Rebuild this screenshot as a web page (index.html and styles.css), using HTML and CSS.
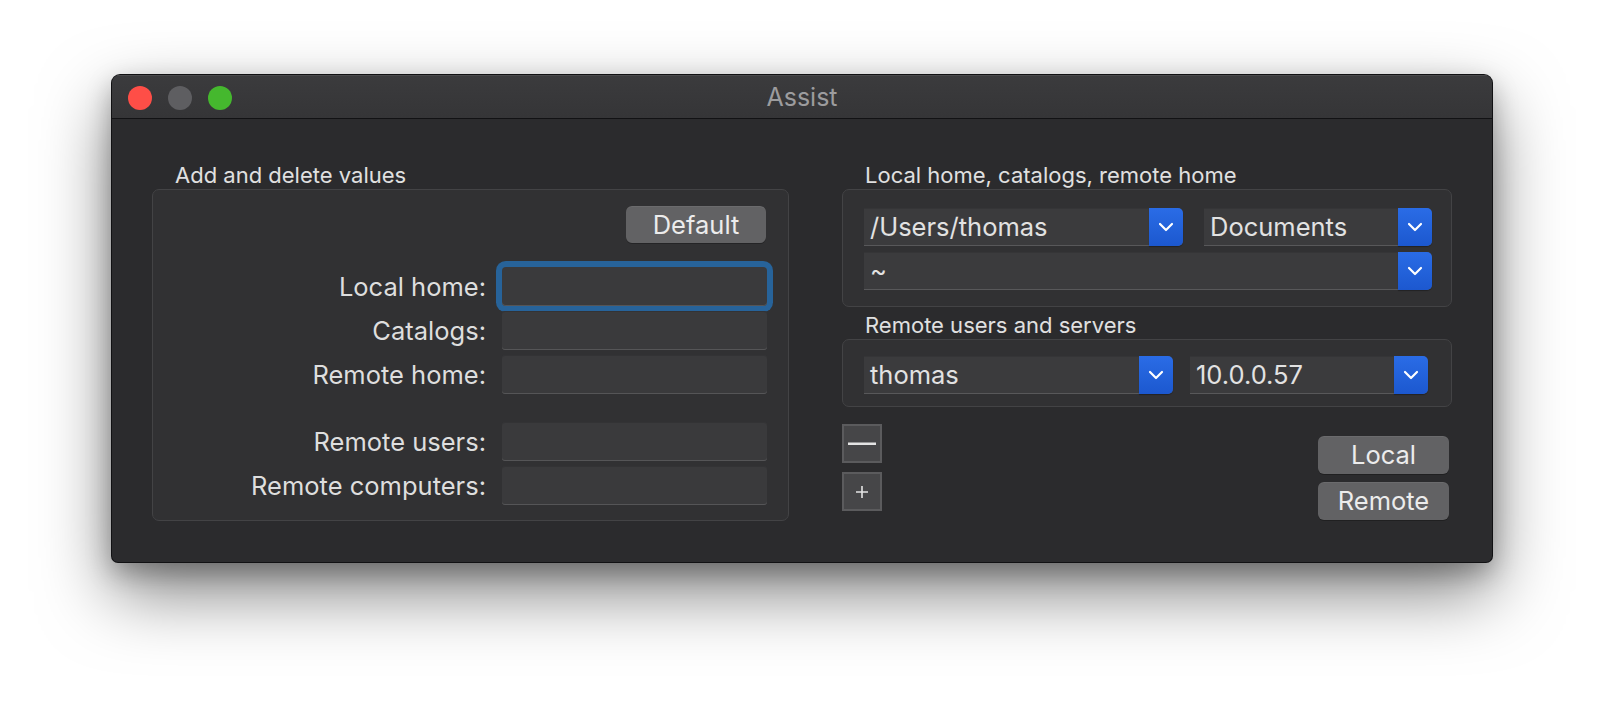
FILE: index.html
```html
<!DOCTYPE html>
<html>
<head>
<meta charset="utf-8">
<title>Assist</title>
<link rel="stylesheet" href="styles.css">
</head>
<body>
<div class="window">
  <div class="titlebar">
    <div class="lights">
      <span class="light red"></span>
      <span class="light gray"></span>
      <span class="light green"></span>
    </div>
    <div class="title">Assist</div>
    <div class="spacer"></div>
  </div>
  <div class="content">
    <section class="col col-left">
      <div class="group-label">Add and delete values</div>
      <div class="box box-values">
        <div class="btn-row"><button class="btn btn-default">Default</button></div>
        <div class="form">
          <label class="lbl">Local home:</label><div class="field focused"></div>
          <label class="lbl">Catalogs:</label><div class="field"></div>
          <label class="lbl">Remote home:</label><div class="field"></div>
          <label class="lbl sep">Remote users:</label><div class="field sep"></div>
          <label class="lbl">Remote computers:</label><div class="field"></div>
        </div>
      </div>
    </section>
    <section class="col col-right">
      <div class="group-label">Local home, catalogs, remote home</div>
      <div class="box box-paths">
        <div class="row row-paths">
          <div class="popup w-users"><span class="ptext">/Users/thomas</span><span class="pbtn"><svg width="16" height="10" viewBox="0 0 16 10"><polyline points="2,2 8,8 14,2" fill="none" stroke="#fff" stroke-width="2.2" stroke-linecap="round" stroke-linejoin="round"/></svg></span></div>
          <div class="popup w-docs"><span class="ptext">Documents</span><span class="pbtn"><svg width="16" height="10" viewBox="0 0 16 10"><polyline points="2,2 8,8 14,2" fill="none" stroke="#fff" stroke-width="2.2" stroke-linecap="round" stroke-linejoin="round"/></svg></span></div>
        </div>
        <div class="popup w-full"><span class="ptext">~</span><span class="pbtn"><svg width="16" height="10" viewBox="0 0 16 10"><polyline points="2,2 8,8 14,2" fill="none" stroke="#fff" stroke-width="2.2" stroke-linecap="round" stroke-linejoin="round"/></svg></span></div>
      </div>
      <div class="group-label">Remote users and servers</div>
      <div class="box box-remote">
        <div class="row row-remote">
          <div class="popup w-user"><span class="ptext">thomas</span><span class="pbtn"><svg width="16" height="10" viewBox="0 0 16 10"><polyline points="2,2 8,8 14,2" fill="none" stroke="#fff" stroke-width="2.2" stroke-linecap="round" stroke-linejoin="round"/></svg></span></div>
          <div class="popup w-server"><span class="ptext">10.0.0.57</span><span class="pbtn"><svg width="16" height="10" viewBox="0 0 16 10"><polyline points="2,2 8,8 14,2" fill="none" stroke="#fff" stroke-width="2.2" stroke-linecap="round" stroke-linejoin="round"/></svg></span></div>
        </div>
      </div>
      <div class="actions">
        <div class="pm">
          <button class="sq"><svg width="28" height="4" viewBox="0 0 28 4"><rect x="0" y="0.5" width="28" height="2.5" fill="#e4e4e4"/></svg></button>
          <button class="sq"><svg width="14" height="14" viewBox="0 0 14 14"><path d="M7 1V13M1 7H13" stroke="#e4e4e4" stroke-width="1.6"/></svg></button>
        </div>
        <div class="lr">
          <button class="btn btn-side">Local</button>
          <button class="btn btn-side">Remote</button>
        </div>
      </div>
    </section>
  </div>
</div>
</body>
</html>
```
FILE: styles.css
```css
* { box-sizing: border-box; }
html, body { margin: 0; padding: 0; }
body {
  background: #ffffff;
  width: 1604px;
  height: 710px;
  overflow: hidden;
  padding: 75px 0 0 112px;
  font-family: "Inter", "Roboto", "Liberation Sans", sans-serif;
  color: #dedede;
}
.window {
  width: 1380px;
  height: 487px;
  background: #2b2b2d;
  border-radius: 8px 8px 6px 6px;
  box-shadow: 0 0 0 1px #111113, 0 30px 70px rgba(0,0,0,0.5), 0 10px 26px rgba(0,0,0,0.28);
  overflow: hidden;
  display: flex;
  flex-direction: column;
}
.titlebar {
  height: 44px;
  flex: none;
  display: grid;
  grid-template-columns: 1fr auto 1fr;
  align-items: center;
  background: linear-gradient(#3b3b3d, #353537);
  border-bottom: 1px solid #121214;
  box-shadow: inset 0 1px 0 #4a4a4c;
}
.lights {
  display: flex;
  gap: 16px;
  padding-left: 16px;
  padding-top: 2px;
}
.light {
  width: 24px;
  height: 24px;
  border-radius: 50%;
  display: block;
}
.red { background: #fe4e47; }
.gray { background: #5e5e61; }
.green { background: #45b82e; }
.title {
  font-size: 25px;
  color: #9c9c9e;
  padding-top: 1px;
}
.content {
  flex: 1;
  display: flex;
  gap: 53px;
  padding: 44px 40px 0 40px;
}
.col { display: flex; flex-direction: column; }
.col-left { width: 637px; }
.col-right { width: 610px; }
.group-label {
  font-size: 22px;
  line-height: 24px;
  height: 24px;
  padding-left: 23px;
  margin-bottom: 2px;
  color: #e0e0e0;
  white-space: nowrap;
}
.box {
  background: #313133;
  border: 1px solid #434345;
  border-radius: 7px;
}
.box-values {
  height: 332px;
  padding: 16px 21px 0 20px;
}
.btn-row {
  display: flex;
  justify-content: flex-end;
  padding-right: 1px;
}
.btn {
  font-family: inherit;
  font-size: 25.5px;
  color: #ececec;
  background: #626264;
  border: none;
  border-radius: 6px;
  box-shadow: 0 1px 0 rgba(0,0,0,0.25), inset 0 1px 0 rgba(255,255,255,0.06);
  padding: 0;
  line-height: 37px;
}
.btn-default { width: 140px; height: 37px; }
.form {
  margin-top: 24px;
  display: grid;
  grid-template-columns: 1fr 265px;
  column-gap: 16px;
  row-gap: 5px;
}
.lbl {
  font-size: 25.5px;
  line-height: 39px;
  height: 39px;
  text-align: right;
  color: #dedede;
  white-space: nowrap;
}
.field {
  height: 39px;
  background: #3a3a3c;
  border-radius: 3px;
  box-shadow: inset 0 -1px 0 #555557, inset 0 1px 0 #333335;
}
.field.focused {
  box-shadow: 0 0 0 6px #27639a, inset 0 -1px 0 #555557;
  border-radius: 4px;
}
.sep { margin-top: 23px; }

.box-paths {
  height: 118px;
  padding: 18px 19px 0 21px;
  display: flex;
  flex-direction: column;
  gap: 6px;
  margin-bottom: 6px;
}
.row { display: flex; }
.row-paths { gap: 21px; }
.row-remote { gap: 17px; }
.popup {
  height: 38px;
  display: flex;
  background: #3b3b3d;
  border-radius: 0 5px 5px 0;
  box-shadow: inset 0 -1px 0 #58585a, inset 0 1px 0 #353537;
}
.w-users { width: 319px; }
.w-docs { width: 228px; }
.w-full { width: 568px; }
.w-user { width: 309px; }
.w-server { width: 238px; }
.ptext {
  flex: 1;
  font-size: 25.5px;
  line-height: 38px;
  padding-left: 6px;
  color: #e2e2e2;
  white-space: nowrap;
  overflow: hidden;
}
.pbtn {
  width: 34px;
  flex: none;
  display: flex;
  align-items: center;
  justify-content: center;
  background: linear-gradient(#2a6ce6, #1c58cf);
  border-radius: 0 5px 5px 0;
  box-shadow: 0 1px 1px rgba(0,0,0,0.3);
}
.box-remote {
  height: 68px;
  padding: 16px 23px 0 21px;
}
.actions {
  margin-top: 17px;
  display: flex;
  justify-content: space-between;
}
.pm { display: flex; flex-direction: column; gap: 9px; }
.sq {
  width: 40px;
  height: 39px;
  padding: 0;
  background: #464648;
  border: 2px solid #5b5b5d;
  border-radius: 0;
  display: flex;
  align-items: center;
  justify-content: center;
}
.lr {
  display: flex;
  flex-direction: column;
  gap: 8px;
  padding-top: 12px;
  padding-right: 3px;
}
.btn-side { width: 131px; height: 38px; line-height: 38px; }
```
